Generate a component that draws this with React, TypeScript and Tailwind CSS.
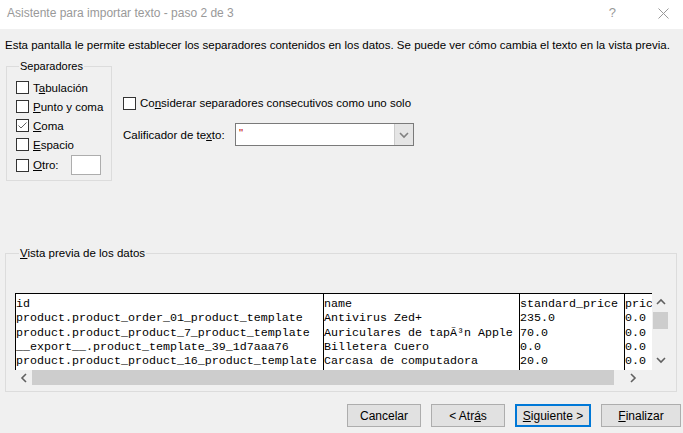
import React from "react";

const Box = ({ checked }: { checked?: boolean }) => (
  <span className="w-[13px] h-[13px] bg-white border border-[#333333] flex items-center justify-center shrink-0">
    {checked && (
      <svg width="11" height="11" viewBox="0 0 11 11">
        <path d="M1.5 5.5 L4 8 L9.5 2.5" stroke="#606060" strokeWidth="1" fill="none" />
      </svg>
    )}
  </span>
);

const Chevron = ({ dir, color = "#606060" }: { dir: "up" | "down" | "left" | "right"; color?: string }) => {
  const d = {
    up: "M1 6 L5 2 L9 6",
    down: "M1 2 L5 6 L9 2",
    left: "M6 1 L2 5 L6 9",
    right: "M2 1 L6 5 L2 9",
  }[dir];
  const w = dir === "up" || dir === "down" ? 10 : 8;
  const h = dir === "up" || dir === "down" ? 8 : 10;
  return (
    <svg width={w} height={h} viewBox={`0 0 ${w} ${h}`}>
      <path d={d} stroke={color} strokeWidth="1.6" fill="none" />
    </svg>
  );
};

const columns = [
  {
    w: "w-[308px]",
    rows: [
      "id",
      "product.product_order_01_product_template",
      "product.product_product_7_product_template",
      "__export__.product_template_39_1d7aaa76",
      "product.product_product_16_product_template",
    ],
  },
  {
    w: "w-[196px]",
    rows: ["name", "Antivirus Zed+", "Auriculares de tapÃ³n Apple", "Billetera Cuero", "Carcasa de computadora"],
  },
  { w: "w-[105px]", rows: ["standard_price", "235.0", "70.0", "0.0", "20.0"] },
  { w: "w-[28px]", rows: ["pric", "0.0", "0.0", "0.0", "0.0"] },
];

const Button = ({ children, primary, w }: { children: React.ReactNode; primary?: boolean; w: string }) => (
  <button
    className={`${w} h-[23px] bg-[#e1e1e1] text-[12px] text-black flex items-center justify-center ${
      primary ? "border-2 border-[#0078d7]" : "border border-[#adadad]"
    }`}
  >
    {children}
  </button>
);

export default function App() {
  return (
    <div className="w-[683px] h-[433px] bg-[#f0f0f0] overflow-hidden text-black font-['Liberation_Sans',Arial,sans-serif] text-[11.5px] leading-[16px]">
      {/* Title bar */}
      <div className="h-[29px] bg-white flex items-center pl-[7px] pr-[14px] text-[#999999] text-[12px]">
        <span className="flex-1 pb-[3px]">Asistente para importar texto - paso 2 de 3</span>
        <span className="mr-[42px] text-[13px] pb-[3px]">?</span>
        <svg width="11" height="11" viewBox="0 0 11 11" className="mb-[3px]">
          <path d="M0.5 0.5 L10.5 10.5 M10.5 0.5 L0.5 10.5" stroke="#999999" strokeWidth="1" />
        </svg>
      </div>

      <div className="pl-[5px] pt-[8px]">
        Esta pantalla le permite establecer los separadores contenidos en los datos. Se puede ver cómo cambia el
        texto en la vista previa.
      </div>

      <div className="flex mt-[5px]">
        <fieldset className="ml-[6px] w-[106px] h-[123px] border border-[#dcdcdc] pl-[9px]">
          <legend className="ml-[3px] px-[1px] text-[11px]">Separadores</legend>
          <div className="flex flex-col mt-[4px]">
            <label className="h-[19px] flex items-center gap-[4px]">
              <Box />
              <span>
                T<u>a</u>bulación
              </span>
            </label>
            <label className="h-[19px] flex items-center gap-[4px]">
              <Box />
              <span>
                <u>P</u>unto y coma
              </span>
            </label>
            <label className="h-[19px] flex items-center gap-[4px]">
              <Box checked />
              <span>
                <u>C</u>oma
              </span>
            </label>
            <label className="h-[19px] flex items-center gap-[4px]">
              <Box />
              <span>
                <u>E</u>spacio
              </span>
            </label>
            <label className="h-[22px] flex items-center gap-[4px]">
              <Box />
              <span>
                <u>O</u>tro:
              </span>
              <span className="ml-[8px] w-[30px] h-[20px] bg-white border border-[#adadad]" />
            </label>
          </div>
        </fieldset>

        <div className="ml-[11px] pt-[37px] flex flex-col">
          <label className="h-[16px] flex items-center gap-[4px]">
            <Box />
            <span>
              Co<u>n</u>siderar separadores consecutivos como uno solo
            </span>
          </label>
          <div className="flex items-center mt-[12px]">
            <span className="w-[112px]">
              Calificador de te<u>x</u>to:
            </span>
            <div className="w-[179px] h-[23px] bg-white border border-[#7a7a7a] flex">
              <span className="flex-1 pl-[3px] text-[#c00000] leading-[18px]">"</span>
              <span className="w-[19px] h-full bg-[#e5e5e5] border-l border-[#cccccc] flex items-center justify-center">
                <Chevron dir="down" color="#808080" />
              </span>
            </div>
          </div>
        </div>
      </div>

      <fieldset className="ml-[5px] mt-[64px] w-[672px] h-[147px] border border-[#dcdcdc] pl-[9px] pr-[7px]">
        <legend className="ml-[4px] px-[1px]">
          <u>V</u>ista previa de los datos
        </legend>
        <div className="mt-[32px] flex">
          <div className="w-[637px] h-[77px] bg-white border-t border-l border-black overflow-hidden flex font-['Liberation_Mono','Courier_New',monospace] text-[11.67px] leading-[14.25px]">
            {columns.map((c, i) => (
              <div key={i} className={`${c.w} shrink-0 h-full border-r border-black pt-[3px] overflow-hidden`}>
                {c.rows.map((r, j) => (
                  <div key={j} className="whitespace-pre">
                    {r}
                  </div>
                ))}
              </div>
            ))}
          </div>
          <div className="w-[17px] h-[77px] flex flex-col items-center pt-[5px]">
            <Chevron dir="up" />
            <div className="mt-[6px] w-[15px] h-[17px] bg-[#cdcdcd]" />
            <div className="flex-1" />
            <div className="pb-[6px]">
              <Chevron dir="down" />
            </div>
          </div>
        </div>
        <div className="w-[637px] h-[15px] flex items-center">
          <div className="w-[17px] flex justify-center">
            <Chevron dir="left" />
          </div>
          <div className="w-[582px] h-[15px] bg-[#cdcdcd]" />
          <div className="flex-1 flex justify-center">
            <Chevron dir="right" />
          </div>
        </div>
      </fieldset>

      <div className="flex justify-end gap-[10px] pr-[2px] mt-[12px]">
        <Button w="w-[74px]">Cancelar</Button>
        <Button w="w-[74px]">
          &lt; Atr<u>á</u>s
        </Button>
        <Button w="w-[76px]" primary>
          <span>
            <u>S</u>iguiente &gt;
          </span>
        </Button>
        <Button w="w-[80px]">
          <span>
            <u>F</u>inalizar
          </span>
        </Button>
      </div>
    </div>
  );
}
